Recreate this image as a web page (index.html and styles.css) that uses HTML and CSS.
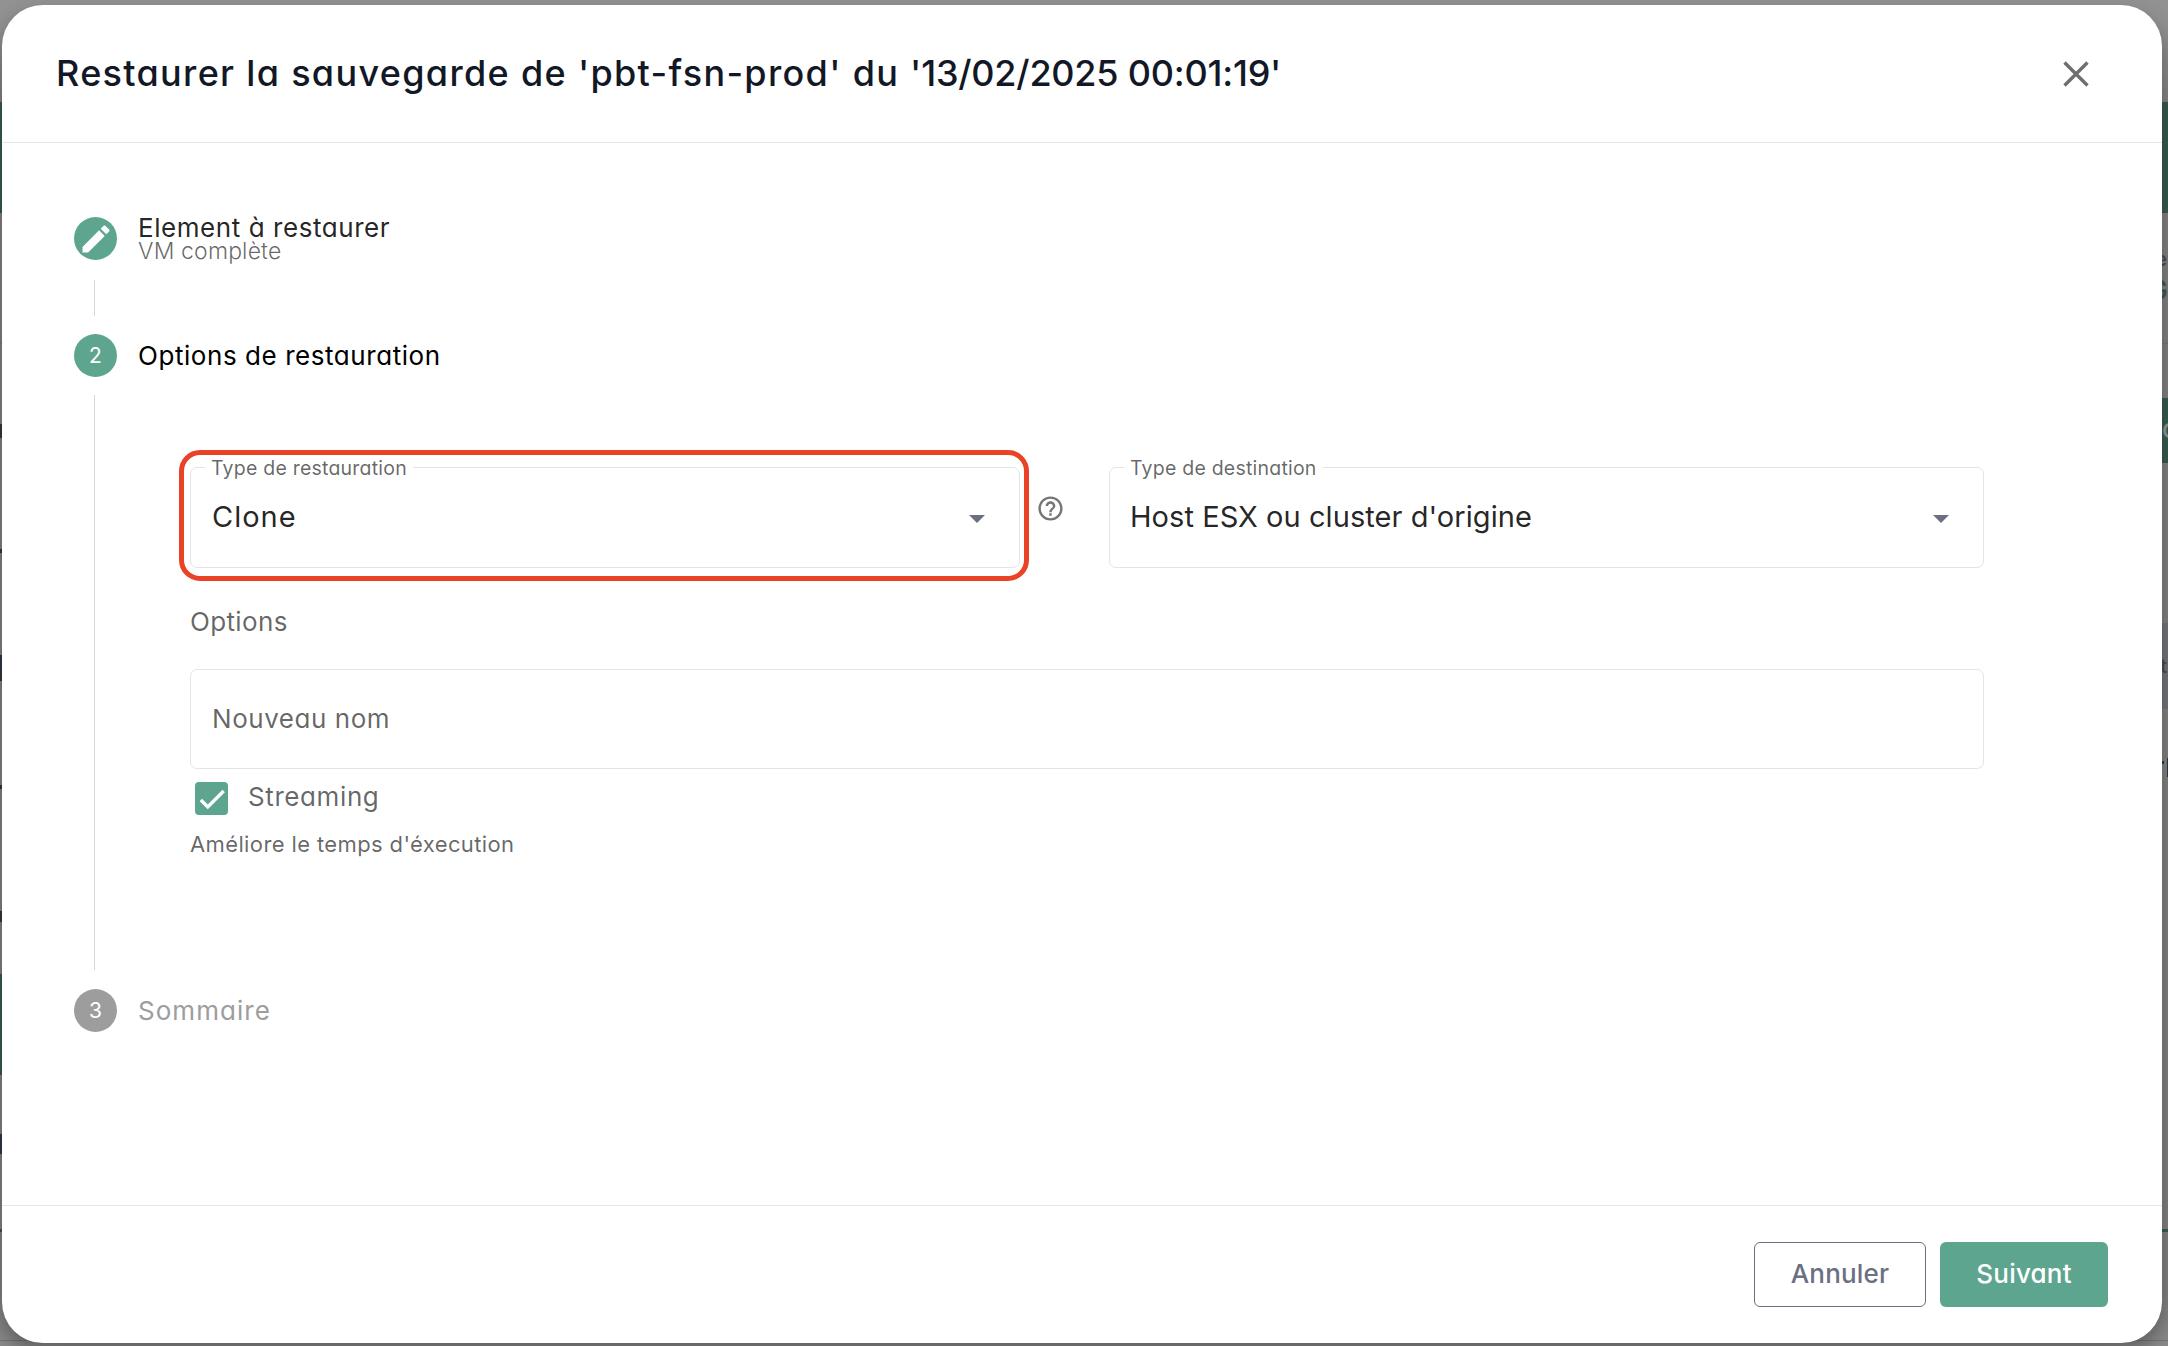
FILE: index.html
```html
<!DOCTYPE html>
<html lang="fr">
<head>
<meta charset="utf-8">
<title>Restaurer la sauvegarde</title>
<link rel="stylesheet" href="styles.css">
</head>
<body>
<div class="backdrop" aria-hidden="true">
  <i class="band band-top"></i>
  <i class="band band-action"></i>
  <i class="band band-table"></i>
  <i class="band band-left"></i>
  <i class="rule rule-green"></i>
  <i class="rule rule-one"></i>
  <i class="rule rule-two"></i>
  <i class="mark m1"></i><i class="mark m2"></i><i class="mark m3"></i><i class="mark m4"></i><i class="mark m5"></i><i class="mark m6"></i>
  <i class="mark m7"></i><i class="mark m8"></i>
  <span class="peek peek-e">e</span>
  <span class="peek peek-g">G</span>
  <span class="peek peek-c">c</span>
  <span class="peek peek-t">t</span>
</div>

<div class="dialog" role="dialog" aria-labelledby="title">
  <header class="dialog-header">
    <h1 class="dialog-title" id="title">Restaurer la sauvegarde de 'pbt-fsn-prod' du <span class="date">'13/02/2025 00:01:19'</span></h1>
    <button class="close" aria-label="Fermer">
      <svg viewBox="0 0 26 26"><path d="M1.5 1.5 24.5 24.5M24.5 1.5 1.5 24.5"/></svg>
    </button>
  </header>

  <main class="dialog-body">
    <section class="step">
      <div class="step-head">
        <span class="step-icon">
          <svg viewBox="0 0 24 24"><path d="M3 17.25V21h3.75L17.81 9.94l-3.75-3.75L3 17.25zM20.71 7.04c.39-.39.39-1.02 0-1.41l-2.34-2.34c-.39-.39-1.02-.39-1.41 0l-1.83 1.83 3.75 3.75 1.83-1.83z"/></svg>
        </span>
        <div class="step-text">
          <span class="step-label">Element à restaurer</span>
          <span class="step-sub">VM complète</span>
        </div>
      </div>
      <div class="connector short"></div>
    </section>

    <section class="step">
      <div class="step-head">
        <span class="step-icon">2</span>
        <span class="step-label active">Options de restauration</span>
      </div>
      <div class="connector long">
        <div class="row">
          <div class="field highlighted">
            <span class="field-label">Type de restauration</span>
            <span class="value clone">Clone</span>
            <i class="arrow"></i>
          </div>
          <svg class="help" viewBox="0 0 24 24"><path d="M11 18h2v-2h-2v2zm1-16C6.48 2 2 6.48 2 12s4.48 10 10 10 10-4.48 10-10S17.52 2 12 2zm0 18c-4.41 0-8-3.59-8-8s3.59-8 8-8 8 3.59 8 8-3.59 8-8 8zm0-14c-2.21 0-4 1.79-4 4h2c0-1.1.9-2 2-2s2 .9 2 2c0 2-3 1.75-3 5h2c0-2.25 3-2.5 3-5 0-2.21-1.79-4-4-4z"/></svg>
          <div class="field destination">
            <span class="field-label">Type de destination</span>
            <span class="value">Host ESX ou cluster d'origine</span>
            <i class="arrow"></i>
          </div>
        </div>
        <div class="options-title">Options</div>
        <div class="field name"><span class="placeholder">Nouveau nom</span></div>
        <div class="check-row">
          <span class="checkbox"><svg viewBox="0 0 24 24"><path d="M1.73 12.91 8.1 19.28 22.79 4.59"/></svg></span>
          <span class="check-label">Streaming</span>
        </div>
        <div class="hint">Améliore le temps d'éxecution</div>
      </div>
    </section>

    <section class="step">
      <div class="step-head">
        <span class="step-icon pending">3</span>
        <span class="step-label pending-label">Sommaire</span>
      </div>
    </section>
  </main>

  <footer class="dialog-footer">
    <button class="btn cancel">Annuler</button>
    <button class="btn next">Suivant</button>
  </footer>
</div>
</body>
</html>
```
FILE: styles.css
```css
* { box-sizing: border-box; }

body {
  margin: 0;
  height: 1346px;
  overflow: hidden;
  padding: 5px 6px 3px 2px;
  background: #8f8f8f;
  font-family: Inter, "Open Sans", sans-serif;
  font-feature-settings: "cv11";
  font-size: 26px;
  color: rgba(0, 0, 0, 0.6);
}

button { font: inherit; font-feature-settings: inherit; margin: 0; padding: 0; }

/* Page visible around the dialog */
.backdrop { position: absolute; inset: 0; overflow: hidden; background: linear-gradient(#929292 0, #909090 30px, #7f7f7f 110px, #7f7f7f 1290px, #8a8a8a 1346px); }
.band, .rule, .mark, .peek { position: absolute; }
.band { left: 0; right: 0; background: #38594e; }
.band-top { top: 102px; height: 111px; }
.band-action { top: 398px; height: 65px; left: 50%; }
.band-table { top: 623px; height: 86px; left: 50%; background: #727376; }
.band-left { top: 974px; height: 101px; right: 50%; }
.rule { left: 0; right: 0; height: 1px; background: #747474; }
.rule-green { top: 1229px; height: 3px; background: #38594e; }
.rule-one { top: 343px; }
.rule-two { top: 1340px; }
.mark { left: 0; width: 2px; background: #30363f; }
.m1 { top: 424px; height: 14px; }
.m2 { top: 549px; height: 4px; }
.m3 { top: 655px; height: 26px; }
.m4 { top: 785px; height: 4px; }
.m5 { top: 911px; height: 11px; }
.m6 { top: 1134px; height: 20px; }
.m7 { left: 2162px; top: 761px; height: 3px; }
.m8 { left: 2167px; top: 758px; height: 19px; width: 1px; }
.peek { font-weight: 500; line-height: 26px; color: #454751; }
.peek-e { right: 1px; top: 246px; font-size: 20px; }
.peek-g { right: 0; top: 277px; font-size: 28px; color: #38594e; }
.peek-c { right: -9px; top: 416px; color: #8e9693; }
.peek-t { right: 1px; top: 653px; font-size: 20px; }

/* Dialog */
.dialog {
  position: relative;
  display: flex;
  flex-direction: column;
  height: 1338px;
  border-radius: 41px;
  background: #fff;
  box-shadow: 0 10px 20px rgba(0, 0, 0, 0.3);
}
.dialog-header {
  flex: 0 0 138px;
  display: flex;
  align-items: center;
  justify-content: space-between;
  padding: 0 73px 0 54px;
  border-bottom: 1px solid #e6e6e6;
}
.dialog-title { margin: 0 0 2px; font-size: 36px; font-weight: 500; letter-spacing: 1.32px; line-height: 44px; color: #121826; }
.date { letter-spacing: -0.22px; }
.close { display: flex; border: 0; background: none; }
.close svg { width: 26px; height: 26px; fill: none; stroke: #6f6f6f; stroke-width: 3.4; }

.dialog-body { flex: 1; padding: 74px 178px 0 72px; }
.step-head { display: flex; align-items: center; gap: 21px; height: 43px; }
.step-icon {
  display: flex;
  align-items: center;
  justify-content: center;
  flex: none;
  width: 43px;
  height: 43px;
  border-radius: 50%;
  background: #5ea590;
  color: #fff;
  font-size: 21px;
}
.step-icon svg { width: 36px; height: 36px; fill: currentColor; }
.step-text { display: flex; flex-direction: column; gap: 1px; margin-top: 1px; }
.step-label { line-height: 22px; letter-spacing: 0.56px; color: rgba(0, 0, 0, 0.87); }
.step-sub { font-size: 23px; font-weight: 300; line-height: 22px; letter-spacing: 0.15px; }
.active { color: #000; }
.pending { background: #9d9d9d; }
.pending-label { letter-spacing: 1.05px; color: #9d9d9d; }

.connector { margin-left: 20px; border-left: 1px solid #d6d6d6; }
.short { height: 36px; margin-top: 20px; margin-bottom: 18px; }
.long { height: 575px; margin-top: 18px; margin-bottom: 19px; padding: 72px 0 0 95px; }

.row { display: flex; align-items: flex-start; }
.field {
  position: relative;
  display: flex;
  align-items: center;
  height: 101px;
  padding: 0 34px 0 20px;
  border: 1px solid #e4e4e4;
  border-radius: 7px;
}
.row .field { flex: 0 0 830px; justify-content: space-between; }
.row .destination { flex: 1 0 0; }
.highlighted::after {
  content: "";
  position: absolute;
  inset: -18px -10px -14px -12px;
  border: 5px solid #ea4226;
  border-radius: 21px;
}
.field-label {
  position: absolute;
  left: 14px;
  top: -12px;
  padding: 0 6px;
  background: #fff;
  font-size: 19.5px;
  line-height: 24px;
  letter-spacing: 0.22px;
}
.value { font-size: 29px; line-height: 36px; letter-spacing: 0.06px; color: rgba(0, 0, 0, 0.87); margin-top: -1px; }
.clone { letter-spacing: 1px; margin-left: 1px; }
.arrow { width: 16px; height: 8px; background: #6a7082; clip-path: polygon(0 0, 100% 0, 50% 100%); margin-top: 3px; }
.help { flex: none; width: 29px; height: 29px; margin: 27px 44px 0 16px; fill: #757575; }

.options-title { height: 32px; margin-top: 38px; line-height: 32px; letter-spacing: 0.35px; }
.name { margin-top: 31px; height: 100px; }
.placeholder { letter-spacing: 0.55px; line-height: 32px; margin: -1px 0 0 1px; }
.check-row { display: flex; align-items: center; gap: 20px; margin: 13px 0 0 5px; }
.checkbox { display: flex; align-items: center; justify-content: center; width: 33px; height: 33px; border-radius: 4px; background: #5ea590; }
.checkbox svg { width: 26px; height: 26px; fill: none; stroke: #fff; stroke-width: 3.12; }
.check-label { line-height: 30px; letter-spacing: 0.6px; margin-top: -3px; }
.hint { margin-top: 15px; font-size: 22px; line-height: 28px; letter-spacing: 0.38px; }

.dialog-footer {
  flex: 0 0 138px;
  display: flex;
  justify-content: flex-end;
  gap: 14px;
  padding: 36px 54px 0 0;
  border-top: 1px solid #e6e6e6;
}
.btn { height: 65px; border-radius: 6px; font-weight: 500; letter-spacing: 0.2px; padding-bottom: 3px; }
.cancel { width: 172px; border: 1px solid #6a7082; background: #fff; color: #6a7082; }
.next { width: 168px; border: 0; background: #5ea590; color: #fff; }
```
